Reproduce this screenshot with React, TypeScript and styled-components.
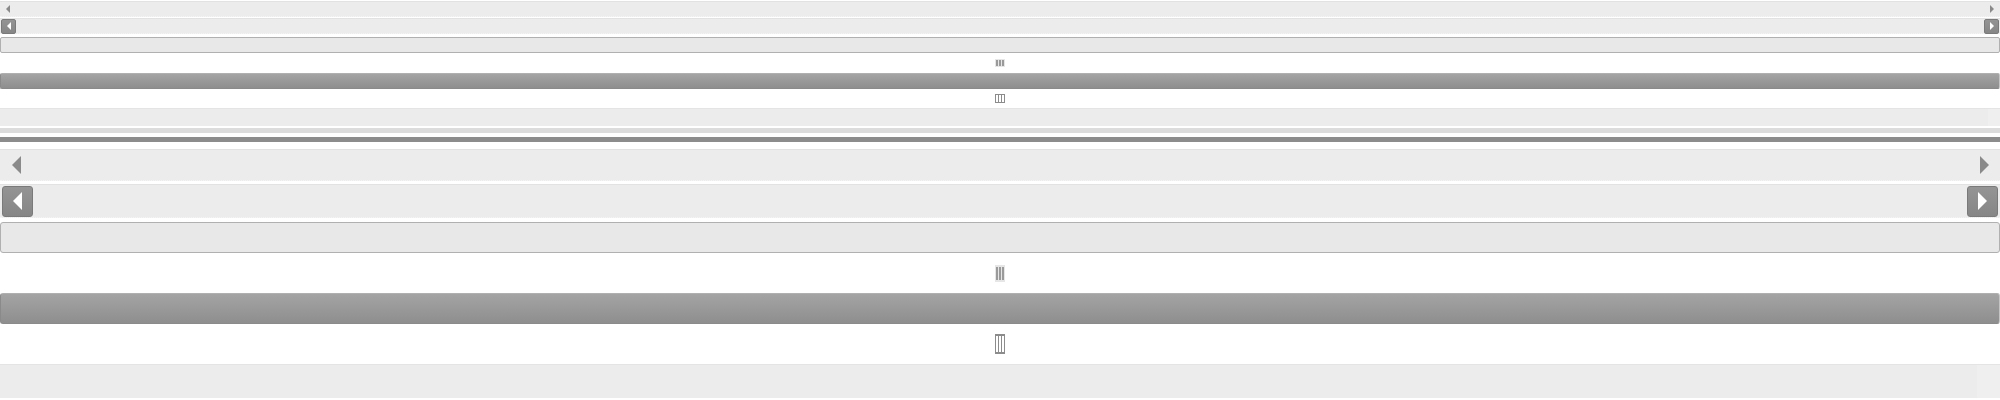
import React from "react";
import styled, { createGlobalStyle } from "styled-components";

const Global = createGlobalStyle`
  html, body { margin: 0; padding: 0; background: #ffffff; }
  body { font-family: "Liberation Sans", Arial, sans-serif; }
`;

const Page = styled.div`
  display: flex;
  flex-direction: column;
  width: 2000px;
  padding-top: 1px;
`;

const Track = styled.div<{ $h: number; $mt?: number }>`
  box-sizing: border-box;
  height: ${(p) => p.$h}px;
  margin-top: ${(p) => p.$mt ?? 0}px;
  background: #ececec;
  border-top: 1px solid #e2e2e2;
  border-bottom: 1px dotted #f4f4f4;
  display: flex;
  align-items: center;
  justify-content: space-between;
  padding: 0 ${(p) => (p.$h > 24 ? 2 : 1)}px;
`;

const Arrow = styled.span<{ $dir: "l" | "r"; $s: number; $w: number; $c: string }>`
  width: 0;
  height: 0;
  border-top: ${(p) => p.$s}px solid transparent;
  border-bottom: ${(p) => p.$s}px solid transparent;
  ${(p) =>
    p.$dir === "l"
      ? `border-right: ${p.$w}px solid ${p.$c};`
      : `border-left: ${p.$w}px solid ${p.$c};`}
`;

const PlainEnd = styled.div<{ $w: number }>`
  width: ${(p) => p.$w}px;
  display: flex;
  justify-content: center;
`;

const ArrowButton = styled.div<{ $size: number }>`
  box-sizing: border-box;
  width: ${(p) => p.$size}px;
  height: ${(p) => p.$size}px;
  background: linear-gradient(#949494, #868686);
  border: 1px solid #7a7a7a;
  border-radius: ${(p) => (p.$size > 20 ? 3 : 2)}px;
  display: flex;
  align-items: center;
  justify-content: center;
`;

const Bordered = styled.div<{ $h: number; $mt: number; $r: number }>`
  box-sizing: border-box;
  height: ${(p) => p.$h}px;
  margin-top: ${(p) => p.$mt}px;
  background: #e8e8e8;
  border: 1px solid #b0b0b0;
  border-radius: ${(p) => p.$r}px;
`;

const HandleRow = styled.div<{ $h: number }>`
  height: ${(p) => p.$h}px;
  display: flex;
  align-items: center;
  justify-content: center;
`;

const Grip = styled.div<{ $w: number; $h: number; $dark?: boolean }>`
  box-sizing: border-box;
  width: ${(p) => p.$w}px;
  height: ${(p) => p.$h}px;
  background: ${(p) => (p.$dark ? "#8c8c8c" : "#e6e6e6")};
  display: flex;
  justify-content: center;
  align-items: stretch;
  gap: 1px;
  padding: ${(p) => (p.$h > 12 ? "2px 1px" : "1px 1px")};
`;

const GripBar = styled.span<{ $dark?: boolean }>`
  width: 2px;
  background: ${(p) => (p.$dark ? "#ffffff" : "#9a9a9a")};
`;

const Thumb = styled.div<{ $h: number; $r: number }>`
  box-sizing: border-box;
  height: ${(p) => p.$h}px;
  background: linear-gradient(#a4a4a4, #8e8e8e);
  border: 1px solid #8a8a8a;
  border-top-color: #b0b0b0;
  border-right-color: #c4c4c4;
  border-radius: ${(p) => p.$r}px;
`;

const Band = styled.div<{ $h: number; $mt?: number; $edge: number }>`
  box-sizing: border-box;
  height: ${(p) => p.$h}px;
  margin-top: ${(p) => p.$mt ?? 0}px;
  background: linear-gradient(
    90deg,
    #ececec 0,
    #ececec ${(p) => p.$edge}px,
    #efefef ${(p) => p.$edge}px
  );
  border-top: 1px solid #e4e4e4;
`;

const Line = styled.div<{ $h: number; $mt: number; $c: string }>`
  height: ${(p) => p.$h}px;
  margin-top: ${(p) => p.$mt}px;
  background: ${(p) => p.$c};
`;

function Grips({ w, h, dark }: { w: number; h: number; dark?: boolean }) {
  return (
    <Grip $w={w} $h={h} $dark={dark}>
      <GripBar $dark={dark} />
      <GripBar $dark={dark} />
      <GripBar $dark={dark} />
    </Grip>
  );
}

export default function App() {
  return (
    <>
      <Global />
      <Page>
        {/* small size */}
        <Track $h={16}>
          <PlainEnd $w={14}>
            <Arrow $dir="l" $s={4} $w={4} $c="#8a8a8a" />
          </PlainEnd>
          <PlainEnd $w={14}>
            <Arrow $dir="r" $s={4} $w={4} $c="#8a8a8a" />
          </PlainEnd>
        </Track>
        <Track $h={16} $mt={1}>
          <ArrowButton $size={15}>
            <Arrow $dir="l" $s={4} $w={4} $c="#ffffff" />
          </ArrowButton>
          <ArrowButton $size={15}>
            <Arrow $dir="r" $s={4} $w={4} $c="#ffffff" />
          </ArrowButton>
        </Track>
        <Bordered $h={16} $mt={3} $r={2} />
        <HandleRow $h={20}>
          <Grips w={10} h={8} />
        </HandleRow>
        <Thumb $h={16} $r={2} />
        <HandleRow $h={19}>
          <Grips w={10} h={9} dark />
        </HandleRow>
        <Band $h={18} $edge={1988} />
        <Line $h={5} $mt={2} $c="#dcdcdc" />
        <Line $h={5} $mt={4} $c="#8c8c8c" />

        {/* large size */}
        <Track $h={32} $mt={7}>
          <PlainEnd $w={28}>
            <Arrow $dir="l" $s={9} $w={9} $c="#8a8a8a" />
          </PlainEnd>
          <PlainEnd $w={28}>
            <Arrow $dir="r" $s={9} $w={9} $c="#8a8a8a" />
          </PlainEnd>
        </Track>
        <Track $h={34} $mt={3}>
          <ArrowButton $size={31}>
            <Arrow $dir="l" $s={9} $w={9} $c="#ffffff" />
          </ArrowButton>
          <ArrowButton $size={31}>
            <Arrow $dir="r" $s={9} $w={9} $c="#ffffff" />
          </ArrowButton>
        </Track>
        <Bordered $h={31} $mt={4} $r={3} />
        <HandleRow $h={40}>
          <Grips w={10} h={17} />
        </HandleRow>
        <Thumb $h={31} $r={3} />
        <HandleRow $h={40}>
          <Grips w={10} h={20} dark />
        </HandleRow>
        <Band $h={34} $edge={1977} />
      </Page>
    </>
  );
}
